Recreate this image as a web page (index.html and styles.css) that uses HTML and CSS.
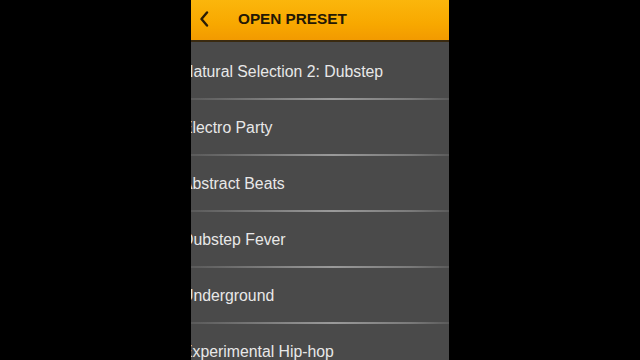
FILE: index.html
```html
<!DOCTYPE html>
<html>
<head>
<meta charset="utf-8">
<link rel="stylesheet" href="styles.css">
</head>
<body>
<div class="page">
  <div class="screen">
    <div class="header">
      <svg class="back" width="10" height="16" viewBox="0 0 10 16"><path d="M8 1.5 L2.5 8 L8 14.5" fill="none" stroke="#2b1d05" stroke-width="2.4" stroke-linecap="round" stroke-linejoin="round"/></svg>
      <span class="title">OPEN PRESET</span>
    </div>
    <ul class="list">
      <li class="item"><span class="name">Natural Selection 2: Dubstep</span></li>
      <li class="item"><span class="name">Electro Party</span></li>
      <li class="item"><span class="name">Abstract Beats</span></li>
      <li class="item"><span class="name">Dubstep Fever</span></li>
      <li class="item"><span class="name">Underground</span></li>
      <li class="item"><span class="name">Experimental Hip-hop</span></li>
    </ul>
  </div>
</div>
</body>
</html>
```
FILE: styles.css
```css
html, body {
  margin: 0;
  padding: 0;
  background: #000;
  width: 640px;
  height: 360px;
  overflow: hidden;
}
.page {
  display: flex;
  justify-content: center;
  height: 360px;
}
.screen {
  width: 258px;
  height: 360px;
  overflow: hidden;
  background: #4a4a4a;
  font-family: "Liberation Sans", Arial, sans-serif;
}
.header {
  height: 40px;
  background: linear-gradient(to bottom, #fbb60c 0%, #f8a800 60%, #f29a00 100%);
  border-bottom: 2px solid #3a2a10;
  display: flex;
  align-items: center;
  padding-left: 8px;
  box-sizing: content-box;
}
.back {
  margin-top: -3px;
}
.title {
  margin-left: 29px;
  margin-top: -2px;
  font-size: 15.3px;
  font-weight: bold;
  color: #241805;
}
.list {
  list-style: none;
  margin: 0;
  padding: 2px 0 0;
}
.item {
  height: 54px;
  display: flex;
  align-items: center;
  border-bottom: 2px solid transparent;
  border-image: linear-gradient(to right, #5a5a5a, #8a8a8a 40%, #9a9a9a 55%, #7a7a7a 85%, #5a5a5a) 1;
}
.name {
  margin-left: -9px;
  margin-top: 1px;
  font-size: 15.8px;
  color: #e8e8e8;
}
```
